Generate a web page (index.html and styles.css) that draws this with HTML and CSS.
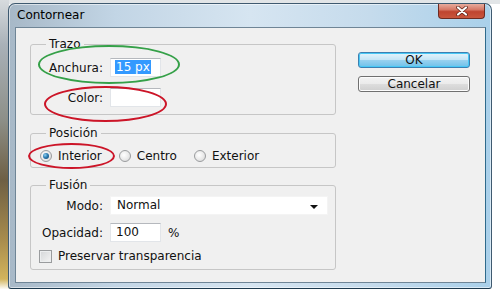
FILE: index.html
```html
<!DOCTYPE html>
<html lang="es">
<head>
<meta charset="utf-8">
<title>Contornear</title>
<link rel="stylesheet" href="styles.css">
</head>
<body>
<div class="screen">
  <div class="window">
    <div class="titlebar">
      <span class="title">Contornear</span>
      <div class="close">
        <svg width="14" height="10" viewBox="0 0 14 10">
          <path d="M3 1.5 L11 8.5 M11 1.5 L3 8.5" stroke="#5a1d14" stroke-width="3.6" stroke-linecap="round"/>
          <path d="M3 1.5 L11 8.5 M11 1.5 L3 8.5" stroke="#ffffff" stroke-width="2.2" stroke-linecap="round"/>
        </svg>
      </div>
    </div>
    <div class="client">
      <div class="left">
        <fieldset class="group trazo">
          <legend>Trazo</legend>
          <div class="form">
            <span class="lbl">Anchura:</span>
            <div class="field small"><span class="sel">15 px</span></div>
            <span class="lbl">Color:</span>
            <div class="field small"></div>
          </div>
        </fieldset>
        <fieldset class="group posicion">
          <legend>Posición</legend>
          <div class="radios">
            <span class="opt"><span class="radio checked"></span>Interior</span>
            <span class="opt"><span class="radio"></span>Centro</span>
            <span class="opt"><span class="radio"></span>Exterior</span>
          </div>
        </fieldset>
        <fieldset class="group fusion">
          <legend>Fusión</legend>
          <div class="form fform">
            <span class="lbl">Modo:</span>
            <div class="field select">Normal<span class="arrow"></span></div>
            <span class="lbl">Opacidad:</span>
            <div class="pct"><div class="field small">100</div><span class="pctsign">%</span></div>
          </div>
          <div class="check"><span class="box"></span>Preservar transparencia</div>
        </fieldset>
      </div>
      <div class="buttons">
        <div class="btn ok">OK</div>
        <div class="btn">Cancelar</div>
      </div>
    </div>
  </div>
  <div class="mark green"></div>
  <div class="mark red1"></div>
  <div class="mark red2"></div>
</div>
</body>
</html>
```
FILE: styles.css
```css
* { box-sizing: border-box; }
html, body { margin: 0; padding: 0; background: #fff; }
body { font-family: "DejaVu Sans", Verdana, sans-serif; font-size: 12px; color: #111; }

.screen {
  position: relative;
  width: 500px;
  height: 300px;
  padding-top: 3px;
  padding-left: 8px;
  background:
    linear-gradient(180deg, #d7dbde 0, #a9b1b8 15%, #8d8f88 40%, #6e5f44 60%, #a88c4c 80%, #d2b45c 93%, #fff 96.5%) 0 0 / 9px 300px no-repeat,
    linear-gradient(#e2e5e7, #e2e5e7) 0 0 / 100% 4px no-repeat,
    #fff;
}

.window {
  width: 484px;
  height: 286px;
  border: 1px solid #3f5a70;
  border-bottom-color: #1d3a4f;
  border-radius: 7px 7px 3px 3px;
  background: linear-gradient(90deg, #a7b8c7 0%, #c2d5e5 22%, #d6e5f1 50%, #c5dbec 75%, #a9d0ea 100%);
  box-shadow: inset 0 0 0 1px rgba(255,255,255,0.55);
  display: flex;
  flex-direction: column;
}

.titlebar {
  height: 23px;
  display: flex;
  justify-content: space-between;
  align-items: flex-start;
  padding-left: 8px;
  padding-right: 6px;
}
.title { align-self: center; color: #000; font-size: 12px; margin-top: -1px; }

.close {
  width: 47px;
  height: 15px;
  border: 1px solid #6d2b22;
  border-top: none;
  border-radius: 0 0 4px 4px;
  background: linear-gradient(180deg, #e7ab9d 0%, #d67866 40%, #bf4430 55%, #c9563d 100%);
  display: flex;
  align-items: center;
  justify-content: center;
}

.client {
  flex: 1;
  margin: 0 5px 5px 6px;
  border: 1px solid #6f8596;
  border-right-color: #2e6a8c;
  background: #f0f0f0;
  display: flex;
  padding: 9px 0 0 14px;
  column-gap: 22px;
}

.left { width: 306px; }

.group {
  margin: 0;
  padding: 0;
  border: 1px solid #c6c6c6;
  border-radius: 3px;
  min-width: 0;
}
.group legend {
  margin-left: 15px;
  padding: 0 3px;
  line-height: 14px;
  font-size: 12px;
}

.form {
  display: grid;
  grid-template-columns: 72px auto;
  column-gap: 7px;
  row-gap: 11px;
  align-items: center;
  justify-items: start;
  padding: 7px 0 7px 0;
}
.lbl { justify-self: end; }

.field {
  height: 19px;
  background: #fff;
  border: 1px solid #e2e5e9;
  border-top-color: #b5b8bd;
  padding-left: 5px;
  line-height: 17px;
}
.small { width: 51px; }
.sel { background: #3399ff; color: #fff; padding: 0 1px; margin-left: -1px; }

.posicion { margin-top: 11px; }
.radios {
  display: flex;
  align-items: center;
  height: 16px;
  margin: 8px 0 3px 9px;
}
.opt { display: flex; align-items: center; gap: 6px; margin-right: 17px; }
.radio {
  width: 12px;
  height: 12px;
  border-radius: 50%;
  border: 1px solid #9a9c9e;
  background: radial-gradient(circle at 40% 40%, #ffffff 0, #e9e9e9 55%, #cfd1d3 100%);
  display: flex;
  align-items: center;
  justify-content: center;
}
.radio.checked::after {
  content: "";
  width: 6px;
  height: 6px;
  border-radius: 50%;
  background: radial-gradient(circle at 35% 35%, #8fd0f0 0, #2d7db3 45%, #0d3f66 100%);
}

.fusion { margin-top: 10px; }
.fform { padding: 4px 0 0 0; row-gap: 8px; }
.select {
  width: 218px;
  position: relative;
  border-color: #f4f4f4;
  padding-left: 6px;
}
.arrow {
  position: absolute;
  right: 9px;
  top: 8px;
  border-left: 4px solid transparent;
  border-right: 4px solid transparent;
  border-top: 4px solid #111;
}
.pct { display: flex; align-items: center; gap: 7px; }

.check {
  display: flex;
  align-items: center;
  gap: 6px;
  height: 14px;
  margin: 7px 0 6px 8px;
}
.box {
  width: 13px;
  height: 13px;
  border: 1px solid #9a9c9e;
  background: linear-gradient(135deg, #d4d6d8, #f4f4f4);
  box-shadow: inset 0 0 0 1px #eceeef;
}

.buttons {
  display: flex;
  flex-direction: column;
  gap: 8px;
  margin-top: 15px;
}
.btn {
  width: 112px;
  height: 16px;
  border: 1px solid #707070;
  border-radius: 3px;
  background: linear-gradient(180deg, #f3f3f3 0%, #ebebeb 48%, #dddddd 52%, #cfcfcf 100%);
  box-shadow: inset 0 0 0 1px #fcfcfc;
  text-align: center;
  line-height: 14px;
  color: #111;
}
.btn.ok {
  border-color: #3c7fb1;
  background: linear-gradient(180deg, #e5f4fc 0%, #c4e5f6 48%, #98d1ef 52%, #6ec1ea 100%);
  box-shadow: inset 0 0 0 1px #48c8f5;
}

.mark {
  position: absolute;
  border: 2px solid;
  border-radius: 50%;
}
.green { left: 38px; top: 45px; width: 142px; height: 39px; border-color: #35a048; }
.red1 { left: 44px; top: 86px; width: 123px; height: 36px; border-color: #cc1528; }
.red2 { left: 28px; top: 143px; width: 87px; height: 26px; border-color: #cc1528; }
```
